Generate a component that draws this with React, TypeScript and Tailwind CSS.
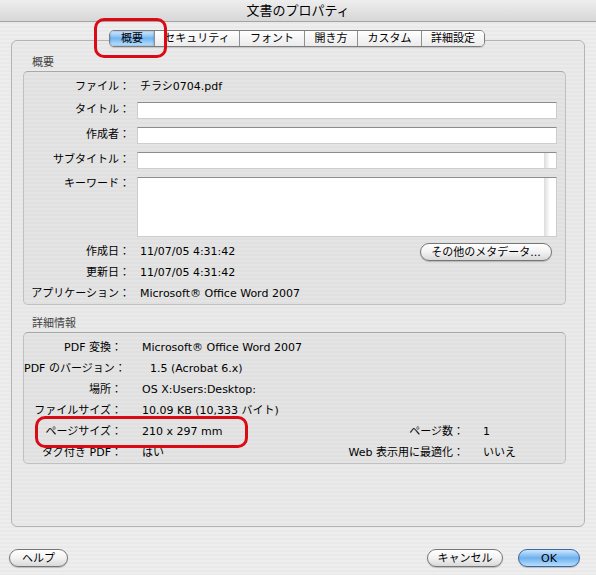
import React from "react";

const tabs = [
  { name: "概要", w: "w-[44px]", active: true },
  { name: "セキュリティ", w: "w-[85px]" },
  { name: "フォント", w: "w-[65px]" },
  { name: "開き方", w: "w-[53px]" },
  { name: "カスタム", w: "w-[64px]" },
  { name: "詳細設定", w: "w-[63px]" },
];

function Field({ h = "h-[17px]", scroll = false }: { h?: string; scroll?: boolean }) {
  return (
    <div className={`ml-[7px] w-[420px] ${h} bg-white border border-[#cdcdcd] border-t-[#8c8c8c] flex justify-end`}>
      {scroll && <div className="w-[12px] h-full bg-linear-to-r from-[#dcdcdc] via-white to-white" />}
    </div>
  );
}

function Label({ children, w = "w-[106px]" }: { children: React.ReactNode; w?: string }) {
  return <div className={`${w} shrink-0 text-right whitespace-nowrap`}>{children}</div>;
}

function PillButton({ children, w, blue = false }: { children: React.ReactNode; w: string; blue?: boolean }) {
  return (
    <button
      className={`${w} h-[18px] rounded-full border text-[11px] leading-none flex items-center justify-center shadow-[0_1px_1px_rgba(0,0,0,0.2)] ${
        blue
          ? "border-[#3b66a3] bg-linear-to-b from-[#cde6fc] via-[#6cb0ee] to-[#b8defd]"
          : "border-[#767676] bg-linear-to-b from-white via-[#f2f2f2] to-[#d9d9d9]"
      }`}
    >
      {children}
    </button>
  );
}

export default function App() {
  return (
    <div className="relative w-[596px] h-[575px] overflow-hidden text-[11px] text-black font-['DejaVu_Sans','Noto_Sans_CJK_JP',sans-serif] bg-[repeating-linear-gradient(180deg,#eeeeee_0px,#eeeeee_2px,#e9e9e9_2px,#e9e9e9_4px)]">
      {/* title bar */}
      <div className="h-[22px] flex items-center justify-center text-[13px] border-b border-[#a3a3a3] bg-linear-to-b from-[#eeeeee] to-[#d7d7d7]">
        文書のプロパティ
      </div>

      {/* tab pane */}
      <div className="relative ml-[11px] mt-[18px] w-[574px] h-[487px] border border-[#b4b4b4] rounded-[6px] bg-[repeating-linear-gradient(180deg,#eaeaea_0px,#eaeaea_2px,#e6e6e6_2px,#e6e6e6_4px)]">
        <div className="absolute top-[-11px] left-[97px] flex h-[17px] border border-[#7d7d7d] rounded-[5px] overflow-hidden shadow-[0_1px_1px_rgba(0,0,0,0.15)]">
          {tabs.map((t, i) => (
            <div
              key={t.name}
              className={`${t.w} h-full flex items-center justify-center text-[11px] leading-none ${
                i > 0 ? "border-l border-[#8f8f8f]" : ""
              } ${
                t.active
                  ? "bg-linear-to-b from-[#d6ebfd] via-[#72b5f0] to-[#c1e4fd] shadow-[inset_0_0_2px_rgba(30,80,150,0.6)]"
                  : "bg-linear-to-b from-white to-[#ebebeb]"
              }`}
            >
              {t.name}
            </div>
          ))}
        </div>

        <div className="pt-[14px] pl-[11px]">
          <div className="h-[16px] leading-[16px] pl-[9px] text-[#444]">概要</div>
          <div className="w-[543px] h-[234px] border border-[#c0c0c0] border-t-[#a8a8a8] rounded-[5px] bg-[repeating-linear-gradient(180deg,#e4e4e4_0px,#e4e4e4_2px,#e0e0e0_2px,#e0e0e0_4px)] pt-[6px]">
            <div className="h-[18px] flex items-center pt-[1px]">
              <Label>ファイル：</Label>
              <div className="ml-[10px]">チラシ0704.pdf</div>
            </div>
            <div className="mt-[6px] flex items-center">
              <Label>タイトル：</Label>
              <Field />
            </div>
            <div className="mt-[8px] flex items-center">
              <Label>作成者：</Label>
              <Field />
            </div>
            <div className="mt-[8px] flex items-center">
              <Label>サブタイトル：</Label>
              <Field scroll />
            </div>
            <div className="mt-[8px] flex items-start">
              <Label>
                <div className="leading-[14px]">キーワード：</div>
              </Label>
              <Field h="h-[60px]" scroll />
            </div>
            <div className="mt-[5px] h-[20px] flex items-center">
              <Label>作成日：</Label>
              <div className="ml-[10px]">11/07/05 4:31:42</div>
              <div className="flex-1" />
              <div className="mr-[13px]">
                <PillButton w="w-[132px]">その他のメタデータ...</PillButton>
              </div>
            </div>
            <div className="h-[21px] flex items-center pt-[1px]">
              <Label>更新日：</Label>
              <div className="ml-[10px]">11/07/05 4:31:42</div>
            </div>
            <div className="h-[21px] flex items-center pt-[1px]">
              <Label>アプリケーション：</Label>
              <div className="ml-[10px]">Microsoft® Office Word 2007</div>
            </div>
          </div>

          <div className="mt-[11px] h-[16px] leading-[16px] pl-[9px] text-[#444]">詳細情報</div>
          <div className="w-[543px] h-[132px] border border-[#c0c0c0] border-t-[#a8a8a8] rounded-[5px] bg-[repeating-linear-gradient(180deg,#e4e4e4_0px,#e4e4e4_2px,#e0e0e0_2px,#e0e0e0_4px)] pt-[5px]">
            <div className="h-[21px] flex items-center">
              <Label w="w-[98px]">PDF 変換：</Label>
              <div className="ml-[20px]">Microsoft® Office Word 2007</div>
            </div>
            <div className="h-[21px] flex items-center">
              <Label w="w-[98px]">PDF のバージョン：</Label>
              <div className="ml-[28px]">1.5 (Acrobat 6.x)</div>
            </div>
            <div className="h-[21px] flex items-center">
              <Label w="w-[98px]">場所：</Label>
              <div className="ml-[20px]">OS X:Users:Desktop:</div>
            </div>
            <div className="h-[21px] flex items-center">
              <Label w="w-[98px]">ファイルサイズ：</Label>
              <div className="ml-[20px]">10.09 KB (10,333 バイト)</div>
            </div>
            <div className="h-[21px] flex items-center">
              <Label w="w-[98px]">ページサイズ：</Label>
              <div className="ml-[20px] flex-1">210 x 297 mm</div>
              <div className="text-right">ページ数：</div>
              <div className="w-[101px] pl-[19px]">1</div>
            </div>
            <div className="h-[20px] flex items-center">
              <Label w="w-[98px]">タグ付き PDF：</Label>
              <div className="ml-[20px] flex-1">はい</div>
              <div className="text-right">Web 表示用に最適化：</div>
              <div className="w-[101px] pl-[19px]">いいえ</div>
            </div>
          </div>
        </div>
      </div>

      {/* bottom buttons */}
      <div className="mt-[22px] flex items-center pl-[9px] pr-[16px]">
        <PillButton w="w-[59px]">ヘルプ</PillButton>
        <div className="flex-1" />
        <PillButton w="w-[76px]">キャンセル</PillButton>
        <div className="w-[15px]" />
        <PillButton w="w-[62px]" blue>
          OK
        </PillButton>
      </div>

      {/* red annotation marks */}
      <div className="absolute left-[94px] top-[18px] w-[73px] h-[40px] border-[3px] border-[#dc0a14] rounded-[10px]" />
      <div className="absolute left-[35px] top-[416px] w-[213px] h-[32px] border-[3px] border-[#dc0a14] rounded-[10px]" />
    </div>
  );
}
